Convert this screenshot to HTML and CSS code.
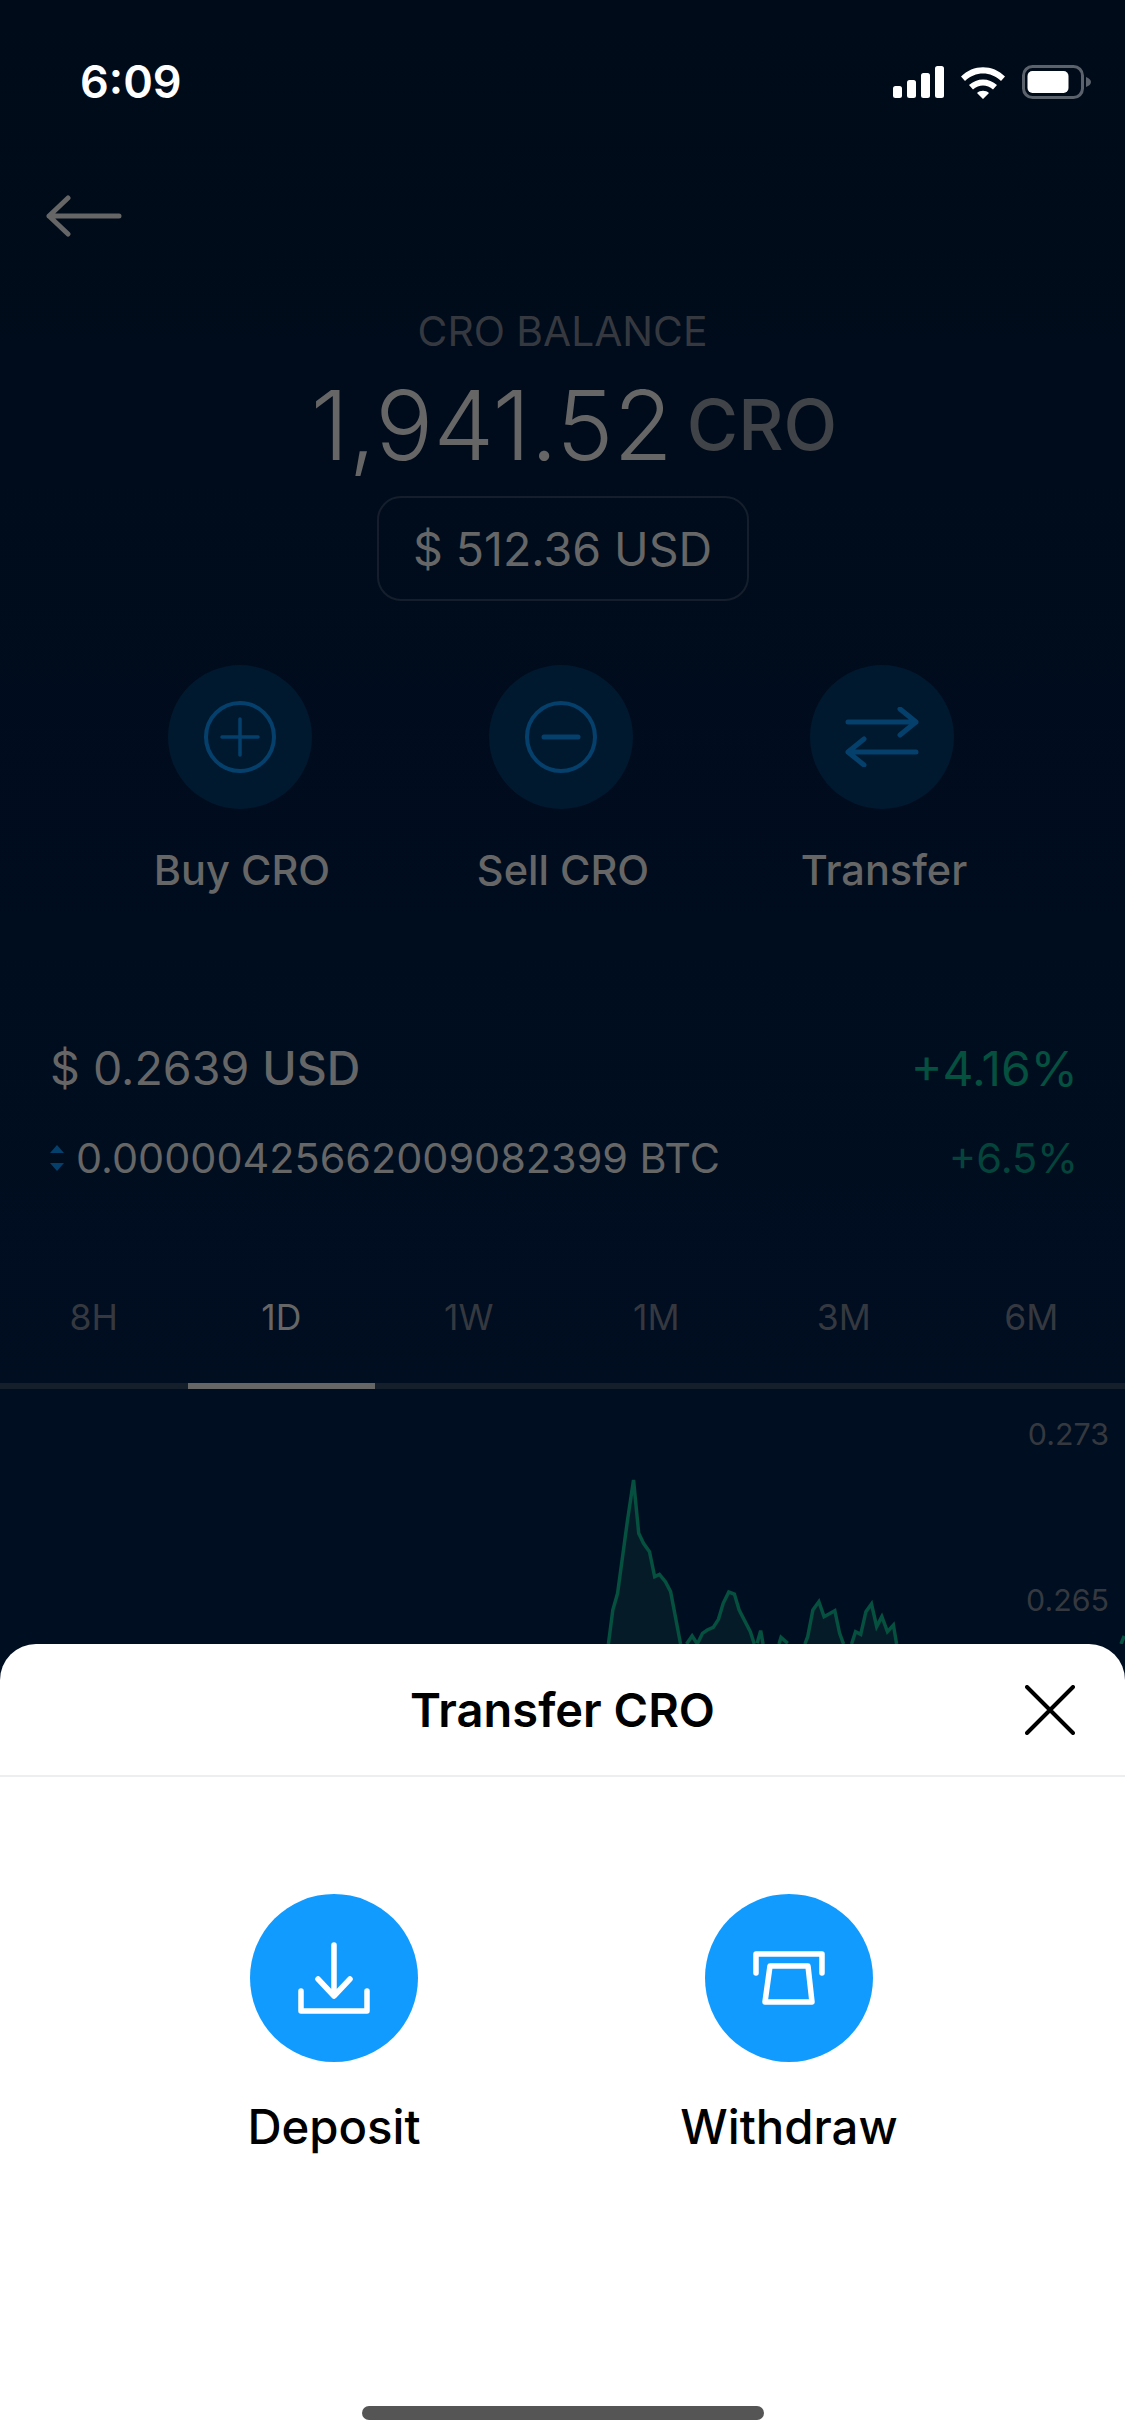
FILE: index.html
```html
<!DOCTYPE html>
<html lang="en">
<head>
    <meta charset="UTF-8">
    <meta name="viewport" content="width=device-width, initial-scale=1.0">
    <title>Transfer CRO</title>
    <link rel="stylesheet" href="styles.css">
</head>
<body>
    <div class="screen">
        <div class="status-bar">
            <span class="clock">6:09</span>
            <div class="status-icons">
                <svg width="51" height="32" viewBox="0 0 51 32"><rect x="0" y="20" width="9" height="12" rx="2.5" fill="#fff"/><rect x="14" y="14" width="9" height="18" rx="2.5" fill="#fff"/><rect x="28" y="7" width="9" height="25" rx="2.5" fill="#fff"/><rect x="42" y="0" width="9" height="32" rx="2.5" fill="#fff"/></svg>
                <svg width="46" height="33" viewBox="0 0 46 33"><path d="M1 10.500 C13 -2 33 -2 45 10.500 L41 15 C31 5 15 5 5 15 Z M9 19 C17 11.500 29 11.500 37 19 L33 23.500 C27 18 19 18 13 23.500 Z M17 27 C20 24 26 24 29 27 L23 33 Z" fill="#fff"/></svg>
                <svg width="69" height="34" viewBox="0 0 69 34"><rect x="1.500" y="1.500" width="59" height="31" rx="9" fill="none" stroke="#5b626b" stroke-width="3"/><rect x="5.500" y="6" width="41" height="22" rx="5" fill="#fff"/><path d="M64 12 C67 13 69 15 69 17 C69 19 67 21 64 22 Z" fill="#5b626b"/></svg>
            </div>
        </div>

        <div class="back">
            <svg width="76" height="44" viewBox="0 0 76 44"><path d="M73 22 H3 M22 4 L3 22 L22 40" fill="none" stroke="#666" stroke-width="5" stroke-linecap="round" stroke-linejoin="round"/></svg>
        </div>

        <div class="balance">
            <div class="balance-title">CRO BALANCE</div>
            <div class="balance-amount"><span>1,941.52</span><span class="balance-unit">CRO</span></div>
            <div class="balance-usd">$ 512.36 USD</div>
        </div>

        <div class="actions">
            <div class="action">
                <div class="action-icon">
                    <svg width="72" height="72" viewBox="0 0 72 72"><circle cx="36" cy="36" r="34" fill="none" stroke="#05406c" stroke-width="4"/><path d="M36 18 V54 M18 36 H54" stroke="#05406c" stroke-width="3.500" stroke-linecap="round"/></svg>
                </div>
                <span>Buy CRO</span>
            </div>
            <div class="action">
                <div class="action-icon">
                    <svg width="72" height="72" viewBox="0 0 72 72"><circle cx="36" cy="36" r="34" fill="none" stroke="#05406c" stroke-width="4"/><path d="M19 36 H53" stroke="#05406c" stroke-width="5" stroke-linecap="round"/></svg>
                </div>
                <span>Sell CRO</span>
            </div>
            <div class="action">
                <div class="action-icon">
                    <svg width="74" height="60" viewBox="0 0 74 60"><path d="M3 15 H71 M55 2 L71 15 L55 28 M71 45 H3 M19 32 L3 45 L19 58" fill="none" stroke="#05406c" stroke-width="5" stroke-linecap="round" stroke-linejoin="round"/></svg>
                </div>
                <span>Transfer</span>
            </div>
        </div>

        <div class="prices">
            <div class="price-row">
                <span class="price-main">$ 0.2639 <b>USD</b></span>
                <span class="change-main">+4.16%</span>
            </div>
            <div class="price-row price-row-small">
                <span class="price-btc"><span class="updown"><i class="up"></i><i class="down"></i></span>0.00000425662009082399 BTC</span>
                <span class="change-btc">+6.5%</span>
            </div>
        </div>

        <div class="tabs">
            <span class="tab">8H</span>
            <span class="tab tab-active">1D</span>
            <span class="tab">1W</span>
            <span class="tab">1M</span>
            <span class="tab">3M</span>
            <span class="tab">6M</span>
        </div>

        <div class="chart">
            <svg class="chart-line" width="625" height="264" viewBox="0 0 1568 792" preserveAspectRatio="none">
                <g class="chart-area">
                    <path d="M272 792 L283 690 L295 640 L320 420 L335 300 L348 460 L360 490 L375 515 L388 590 L400 583 L415 605 L428 635 L440 710 L453 792 Z"/>
                    <path d="M468 792 L482 768 L495 792 L508 760 L520 750 L535 742 L548 718 L560 670 L574 636 L588 642 L600 690 L628 755 L638 792 L645 790 L654 752 L660 792 Z"/>
                    <path d="M700 792 L705 772 L722 790 L722 792 Z"/>
                    <path d="M765 792 L772 770 L785 690 L800 665 L813 710 L840 692 L852 760 L862 792 Z"/>
                    <path d="M882 792 L892 755 L905 763 L918 695 L932 672 L945 740 L958 710 L972 755 L987 735 L995 792 Z"/>
                </g>
                <g class="chart-stroke">
                    <path d="M272 792 L283 690 L295 640 L320 420 L335 300 L348 460 L360 490 L375 515 L388 590 L400 583 L415 605 L428 635 L440 710 L453 792"/>
                    <path d="M468 792 L482 768 L495 792 L508 760 L520 750 L535 742 L548 718 L560 670 L574 636 L588 642 L600 690 L628 755 L638 792"/>
                    <path d="M645 790 L654 752 L660 792"/>
                    <path d="M700 792 L705 772 L722 790"/>
                    <path d="M765 792 L772 770 L785 690 L800 665 L813 710 L840 692 L852 760 L862 792"/>
                    <path d="M882 792 L892 755 L905 763 L918 695 L932 672 L945 740 L958 710 L972 755 L987 735 L995 792"/>
                    <path d="M1558 792 L1566 768"/>
                </g>
            </svg>
            <span class="chart-label chart-label-top">0.273</span>
            <span class="chart-label chart-label-mid">0.265</span>
        </div>

        <div class="sheet">
            <div class="sheet-head">
                <span class="sheet-title">Transfer CRO</span>
                <svg class="sheet-close" width="50" height="50" viewBox="0 0 50 50"><path d="M2 2 L48 48 M48 2 L2 48" stroke="#000" stroke-width="4" stroke-linecap="round"/></svg>
            </div>
            <div class="sheet-options">
                <div class="option">
                    <div class="option-icon">
                        <svg width="72" height="72" viewBox="0 0 72 72"><path d="M36 3 V52 M20 37 L36 54 L52 37 M3 49 V69 H69 V49" fill="none" stroke="#fff" stroke-width="5.500" stroke-linecap="round" stroke-linejoin="round"/></svg>
                    </div>
                    <span>Deposit</span>
                </div>
                <div class="option">
                    <div class="option-icon">
                        <svg width="72" height="54" viewBox="0 0 72 54"><path d="M3 22 V3 H69 V22 M17 15 H55 L59 51 H12 Z" fill="none" stroke="#fff" stroke-width="5.500" stroke-linecap="round" stroke-linejoin="round"/></svg>
                    </div>
                    <span>Withdraw</span>
                </div>
            </div>
            <div class="home-bar"></div>
        </div>
    </div>
</body>
</html>
```

FILE: styles.css
```css
body {
    margin: 0;
    background: #000c1d;
    font-family: 'Inter', 'Roboto', sans-serif;
}
.screen {
    width: 1125px;
    height: 2436px;
    position: relative;
    overflow: hidden;
    background: linear-gradient(#000b19, #000e21 1400px);
}
.status-bar {
    height: 194px;
    box-sizing: border-box;
    padding: 54px 34px 0 80px;
    display: flex;
    justify-content: space-between;
    align-items: flex-start;
}
.clock {
    color: #fff;
    font-size: 45px;
    font-weight: 600;
    line-height: 56px;
}
.status-icons {
    display: flex;
    align-items: center;
    gap: 16px;
    padding-top: 11px;
}
.back {
    padding-left: 46px;
    height: 44px;
}
.balance {
    margin-top: 71px;
    text-align: center;
}
.balance-title {
    color: #35393f;
    font-size: 40.800px;
    line-height: 44px;
}
.balance-amount {
    color: #666;
    font-size: 96.500px;
    font-weight: 300;
    line-height: 110px;
    margin-top: 17px;
    padding-left: 23px;
    display: flex;
    justify-content: center;
    align-items: center;
    gap: 14px;
}
.balance-unit {
    color: #404347;
    font-size: 70px;
    font-weight: 500;
}
.balance-usd {
    margin: 16px auto 0;
    width: 372px;
    height: 105px;
    box-sizing: border-box;
    line-height: 103px;
    border: 2px solid #151f2c;
    border-radius: 24px;
    color: #666;
    font-size: 46.500px;
}
.actions {
    margin-top: 64px;
    padding: 0 133px 0 130px;
    display: flex;
    justify-content: space-between;
}
.action {
    width: 220px;
    display: flex;
    flex-direction: column;
    align-items: center;
    gap: 37px;
    color: #666;
    font-size: 41.500px;
    line-height: 48px;
    font-weight: 500;
}
.action span {
    padding-left: 4px;
}
.action-icon {
    width: 144px;
    height: 144px;
    border-radius: 50%;
    background: #01192f;
    display: flex;
    align-items: center;
    justify-content: center;
}
.prices {
    margin-top: 146px;
    padding: 0 47px 0 50px;
}
.price-row {
    display: flex;
    justify-content: space-between;
    align-items: center;
    height: 56px;
}
.price-row-small {
    margin-top: 34px;
}
.price-main {
    color: #666;
    font-size: 46.500px;
}
.price-main b {
    font-weight: 500;
}
.change-main {
    color: #05503f;
    font-size: 48px;
}
.price-btc {
    color: #666;
    font-size: 41.400px;
    display: flex;
    align-items: center;
}
.change-btc {
    color: #05443b;
    font-size: 41.500px;
}
.updown {
    display: flex;
    flex-direction: column;
    gap: 10px;
    width: 26px;
}
.up, .down {
    display: block;
    width: 0;
    height: 0;
    border-left: 7.500px solid transparent;
    border-right: 7.500px solid transparent;
}
.up {
    border-bottom: 8px solid #05406c;
}
.down {
    border-top: 8px solid #05406c;
}
.tabs {
    margin-top: 92px;
    display: flex;
}
.tab {
    flex: 1;
    text-align: center;
    color: #35393f;
    font-size: 35.500px;
    line-height: 44px;
    padding: 18px 0 43px;
    border-bottom: 6px solid #151f2c;
}
.tab-active {
    color: #666;
    border-bottom-color: #666;
}
.chart {
    position: relative;
    height: 255px;
}
.chart-line {
    position: absolute;
    left: 500px;
    top: -9px;
}
.chart-area path {
    fill: #051b28;
}
.chart-stroke path {
    fill: none;
    stroke: #05503f;
    stroke-width: 3.500px;
    vector-effect: non-scaling-stroke;
}
.chart-label {
    position: absolute;
    right: 16px;
    color: #35393f;
    font-size: 30.400px;
    line-height: 34px;
}
.chart-label-top {
    top: 28px;
}
.chart-label-mid {
    top: 194px;
}
.sheet {
    position: absolute;
    left: 0;
    right: 0;
    top: 1644px;
    bottom: 0;
    background: #fff;
    border-radius: 36px 36px 0 0;
}
.sheet-head {
    height: 131px;
    border-bottom: 2px solid #eceef0;
    position: relative;
    display: flex;
    align-items: center;
    justify-content: center;
}
.sheet-title {
    color: #000;
    font-size: 47px;
    font-weight: 600;
}
.sheet-close {
    position: absolute;
    right: 50px;
    top: 41px;
}
.sheet-options {
    margin-top: 117px;
    padding-left: 224px;
    display: flex;
    gap: 235px;
}
.option {
    width: 220px;
    display: flex;
    flex-direction: column;
    align-items: center;
    gap: 37px;
    color: #000;
    font-size: 47.300px;
    line-height: 56px;
    font-weight: 450;
    white-space: nowrap;
}
.option-icon {
    width: 168px;
    height: 168px;
    border-radius: 50%;
    background: #129bff;
    display: flex;
    align-items: center;
    justify-content: center;
}
.home-bar {
    position: absolute;
    left: 362px;
    bottom: 16px;
    width: 402px;
    height: 14px;
    border-radius: 7px;
    background: #555;
}
```
